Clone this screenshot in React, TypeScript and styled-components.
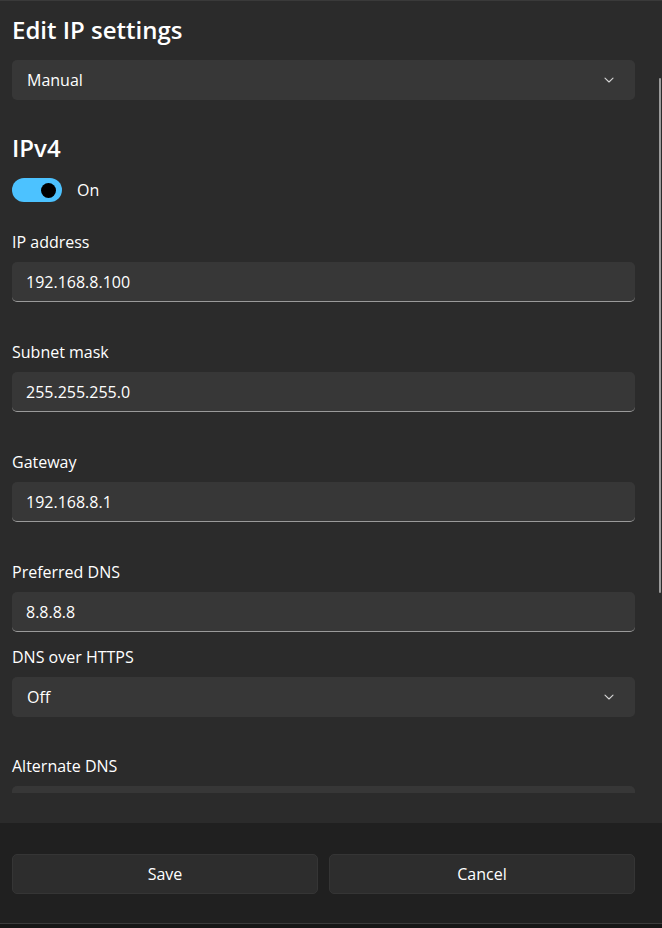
import React from 'react'
import styled, { createGlobalStyle } from 'styled-components'

const GlobalStyle = createGlobalStyle`
  html, body {
    margin: 0;
    padding: 0;
    background: #2b2b2b;
  }
  body {
    font-family: 'Open Sans', 'Noto Sans', sans-serif;
    color: #ffffff;
  }
`

type FieldProps = {
  label: string
  value: string
  space: number
}

const fields: FieldProps[] = [
  { label: 'IP address', value: '192.168.8.100', space: 28 },
  { label: 'Subnet mask', value: '255.255.255.0', space: 40 },
  { label: 'Gateway', value: '192.168.8.1', space: 40 },
  { label: 'Preferred DNS', value: '8.8.8.8', space: 40 },
]

function Chevron(): JSX.Element {
  return (
    <svg width="12" height="12" viewBox="0 0 12 12" fill="none">
      <path d="M2 4.2 L6 8 L10 4.2" stroke="#d6d6d6" strokeWidth="1.1" strokeLinecap="round" strokeLinejoin="round" />
    </svg>
  )
}

export default function App(): JSX.Element {
  return (
    <>
      <GlobalStyle />
      <Window>
        <Content>
          <Title>Edit IP settings</Title>
          <Select>
            <span>Manual</span>
            <Chevron />
          </Select>

          <SectionTitle>IPv4</SectionTitle>
          <ToggleRow>
            <Toggle on>
              <Knob />
            </Toggle>
            <ToggleText>On</ToggleText>
          </ToggleRow>

          {fields.map((f) => (
            <Field key={f.label} space={f.space}>
              <Label>{f.label}</Label>
              <TextBox>{f.value}</TextBox>
            </Field>
          ))}

          <Field space={15}>
            <Label>DNS over HTTPS</Label>
            <Select>
              <span>Off</span>
              <Chevron />
            </Select>
          </Field>

          <Field space={39}>
            <Label>Alternate DNS</Label>
            <TextBox />
          </Field>
          <ScrollThumb />
        </Content>
        <Spacer />
        <Footer>
          <Button>Save</Button>
          <Button>Cancel</Button>
        </Footer>
        <BottomEdge />
      </Window>
    </>
  )
}

const Window = styled.div`
  height: 928px;
  display: flex;
  flex-direction: column;
  border-top: 1px solid #3a3a3a;
  box-sizing: border-box;
  background: #2b2b2b;
  overflow: hidden;
`

const Content = styled.div`
  position: relative;
  height: 792px;
  flex: none;
  overflow: hidden;
  padding: 0 27px 0 12px;
`

const ScrollThumb = styled.div`
  position: absolute;
  right: 1px;
  top: 77px;
  width: 2px;
  height: 515px;
  border-radius: 1px;
  background: #9a9a9a;
`

const Title = styled.h1`
  margin: 13px 0 0;
  font-size: 24px;
  line-height: 32px;
  font-weight: 600;
`

const Select = styled.div`
  margin-top: 14px;
  height: 40px;
  box-sizing: border-box;
  display: flex;
  align-items: center;
  justify-content: space-between;
  padding: 0 20px 0 15px;
  background: #373737;
  border-radius: 5px;
  font-size: 16px;

  label + & {
    margin-top: 10px;
  }
`

const SectionTitle = styled.h2`
  margin: 32px 0 0;
  font-size: 24px;
  line-height: 32px;
  font-weight: 600;
`

const ToggleRow = styled.div`
  margin-top: 12px;
  height: 28px;
  display: flex;
  align-items: center;
  gap: 15px;
`

const Toggle = styled.div<{ on?: boolean }>`
  width: 50px;
  height: 24px;
  border-radius: 12px;
  background: ${(p) => (p.on ? '#4cc2ff' : 'transparent')};
  display: flex;
  align-items: center;
  justify-content: ${(p) => (p.on ? 'flex-end' : 'flex-start')};
  padding: 0 6px;
  box-sizing: border-box;
`

const Knob = styled.div`
  width: 15px;
  height: 15px;
  border-radius: 50%;
  background: #000000;
`

const ToggleText = styled.span`
  font-size: 16px;
`

const Field = styled.div<{ space: number }>`
  margin-top: ${(p) => p.space}px;
  display: flex;
  flex-direction: column;
`

const Label = styled.label`
  font-size: 16px;
  line-height: 20px;
  height: 20px;
`

const TextBox = styled.div`
  margin-top: 10px;
  height: 40px;
  box-sizing: border-box;
  display: flex;
  align-items: center;
  padding: 0 14px;
  background: #373737;
  border-radius: 5px;
  border-bottom: 1px solid #9a9a9a;
  font-size: 16px;
`

const Spacer = styled.div`
  height: 30px;
  flex: none;
`

const Footer = styled.div`
  flex: 1;
  background: #202020;
  display: grid;
  grid-template-columns: 1fr 1fr;
  gap: 11px;
  padding: 31px 27px 0 12px;
  align-content: start;
`

const Button = styled.button`
  height: 40px;
  border-radius: 5px;
  border: 1px solid #353535;
  background: #2d2d2d;
  color: #ffffff;
  font-family: 'Open Sans', 'Noto Sans', sans-serif;
  font-size: 16px;
`

const BottomEdge = styled.div`
  height: 4px;
  flex: none;
  border-top: 1px solid #3c3c3c;
  background: #161616;
`
